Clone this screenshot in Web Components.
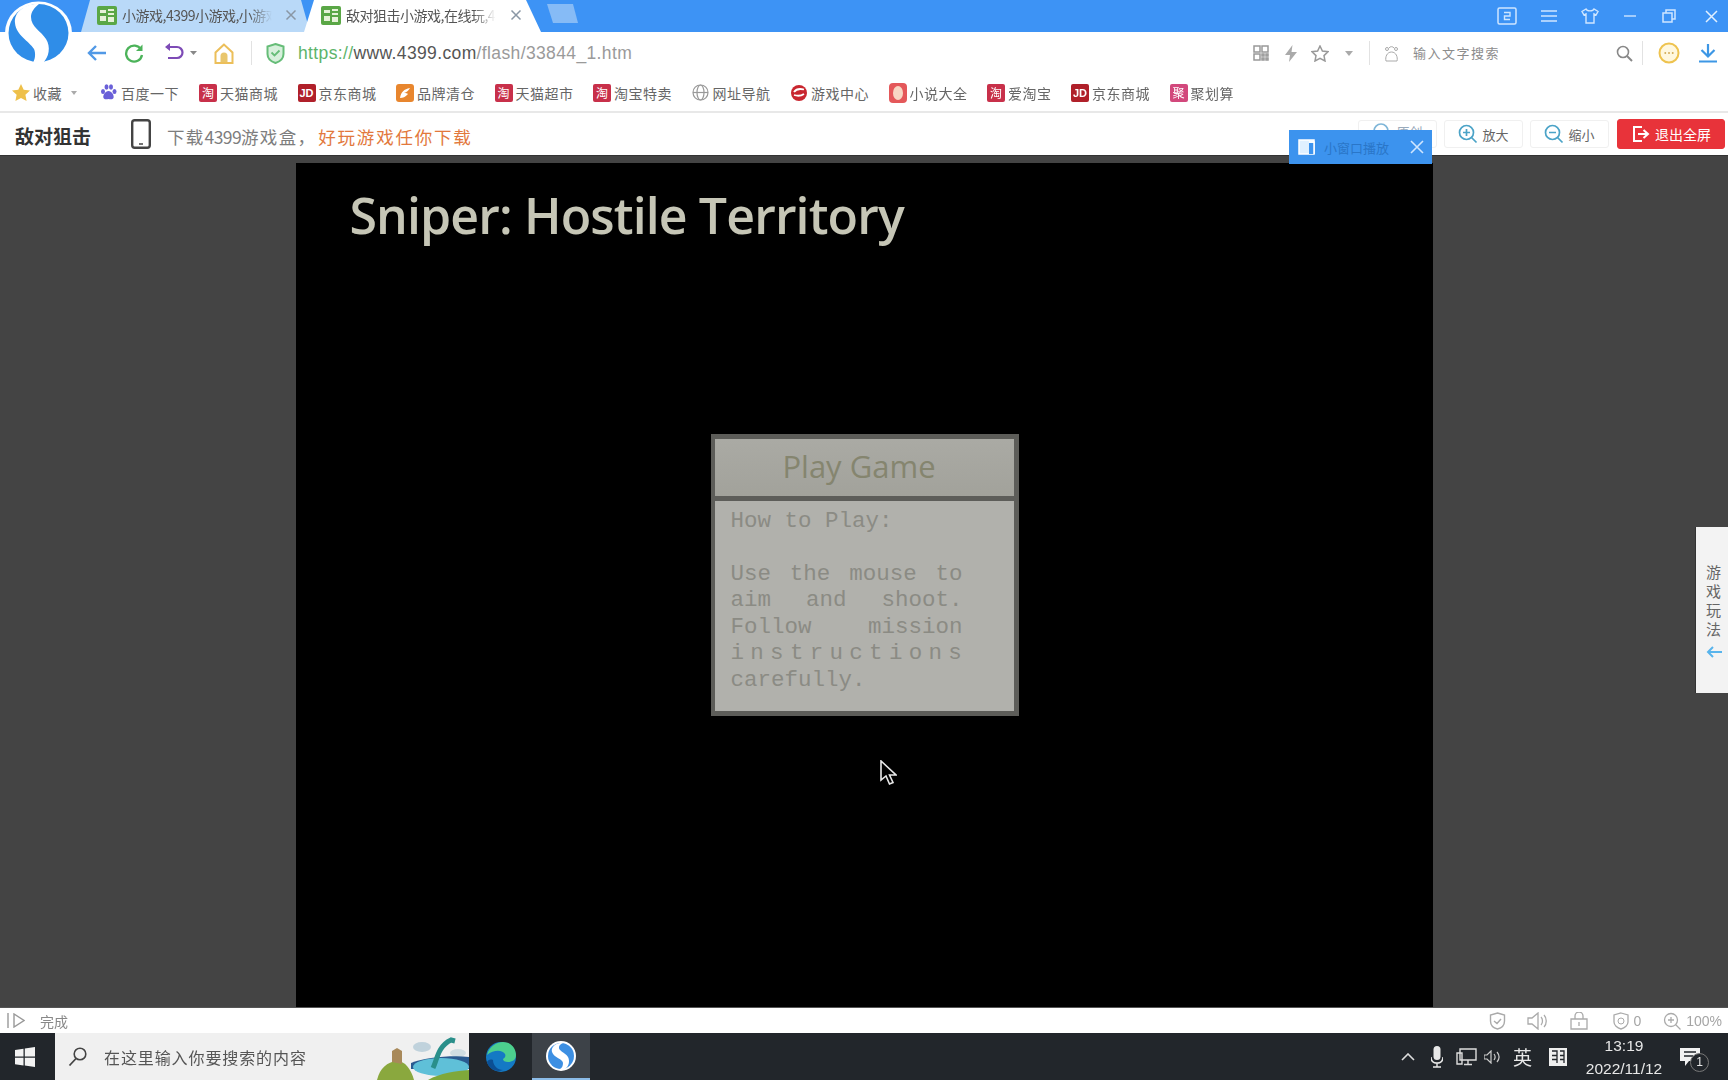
<!DOCTYPE html>
<html lang="zh-CN">
<head>
<meta charset="utf-8">
<title>敌对狙击</title>
<style>
  html, body { margin: 0; height: 100%; background: #444; overflow: hidden; }
  app-shell { filter: blur(.55px); }
</style>
</head>
<body>
<app-shell>
  <browser-tabs></browser-tabs>
  <browser-toolbar></browser-toolbar>
  <bookmark-bar>
    <bookmark-item icon="tmall" style="margin-left:-1px">天猫商城</bookmark-item>
    <bookmark-item icon="jd">京东商城</bookmark-item>
    <bookmark-item icon="brand">品牌清仓</bookmark-item>
    <bookmark-item icon="tmall">天猫超市</bookmark-item>
    <bookmark-item icon="tmall">淘宝特卖</bookmark-item>
    <bookmark-item icon="globe">网址导航</bookmark-item>
    <bookmark-item icon="game">游戏中心</bookmark-item>
    <bookmark-item icon="novel">小说大全</bookmark-item>
    <bookmark-item icon="tmall">爱淘宝</bookmark-item>
    <bookmark-item icon="jd">京东商城</bookmark-item>
    <bookmark-item icon="juhua">聚划算</bookmark-item>
  </bookmark-bar>
  <game-bar></game-bar>
  <game-stage></game-stage>
  <status-bar></status-bar>
  <task-bar></task-bar>
</app-shell>

<script>
const CJK = `"Noto Sans CJK SC", "Noto Sans", sans-serif`;

class AppShell extends HTMLElement {
  constructor() {
    super();
    const shadowRoot = this.attachShadow({mode: 'open'});
    shadowRoot.innerHTML = `
      <style>
        :host { display: flex; flex-direction: column; position: relative; width: 1728px; height: 1080px; overflow: hidden; font-family: ${CJK}; }
        svg { position: absolute; left: 5px; top: 1px; z-index: 5; }
      </style>
      <slot></slot>
      <svg width="67" height="64" viewBox="0 0 67 64">
        <ellipse cx="33.500" cy="32" rx="33.500" ry="31.500" fill="#fff"/>
        <ellipse cx="33.500" cy="32" rx="30" ry="29" fill="#2f8de8"/>
        <path d="M30 3C18 4 9 12 10 22c1 12 14 18 19 26 2 5 1 10-1 14h10c6-6 8-16 3-24-5-8-15-12-15-22 0-5 3-9 8-13z" fill="#fff"/>
      </svg>
    `;
  }
}

class BrowserTab extends HTMLElement {
  constructor() {
    super();
    const shadowRoot = this.attachShadow({mode: 'open'});
    shadowRoot.innerHTML = `
      <style>
        :host { display: flex; align-items: center; width: 229px; height: 32px; box-sizing: border-box; padding: 0 0 2px 16px; background: #b9d9f8; clip-path: polygon(9px 0, 220px 0, 229px 32px, 0 32px); font-size: 14px; color: #555; }
        :host([active]) { width: 237px; background: #fff; clip-path: polygon(10px 0, 222px 0, 237px 32px, 0 32px); padding-left: 17px; z-index: 1; }
        .label { width: 150px; margin-left: 5px; overflow: hidden; white-space: nowrap; letter-spacing: -.5px; -webkit-mask-image: linear-gradient(90deg, #000 85%, transparent); mask-image: linear-gradient(90deg, #000 85%, transparent); }
        .close { margin-left: 13px; }
        :host([active]) .close { margin-left: 14px; }
      </style>
      <svg width="20" height="19" viewBox="0 0 20 19"><rect width="20" height="19" rx="2" fill="#5aa746"/><path d="M3 4h6v3H3zM11 3h6v2h-6zM11 7h6v2h-6zM3 10h6v5H3zM11 11h6v5h-6z" fill="#e6f2d8"/></svg>
      <span class="label"><slot></slot></span>
      <svg class="close" width="12" height="12" viewBox="0 0 12 12"><path d="M1.500 1.500l9 9M10.500 1.500l-9 9" stroke="#8a97a5" stroke-width="1.500"/></svg>
    `;
  }
}

class BrowserTabs extends HTMLElement {
  constructor() {
    super();
    const shadowRoot = this.attachShadow({mode: 'open'});
    shadowRoot.innerHTML = `
      <style>
        :host { display: flex; align-items: center; height: 32px; flex: none; background: #3d93f5; padding-left: 81px; }
        .tabs { display: flex; }
        .tabs browser-tab + browser-tab { margin-left: -6px; }
        .new { width: 31px; height: 19px; margin: 0 0 5px 6px; background: #86bbf6; clip-path: polygon(0 0, 26px 0, 31px 19px, 6px 19px); }
        .win { display: flex; align-items: center; margin-left: auto; padding-right: 10px; }
        .win svg { display: block; }
      </style>
      <div class="tabs">
        <browser-tab>小游戏,4399小游戏,小游戏大全</browser-tab>
        <browser-tab active>敌对狙击小游戏,在线玩,4399</browser-tab>
      </div>
      <div class="new"></div>
      <div class="win">
        <svg width="20" height="18" viewBox="0 0 20 18"><rect x="1" y="1" width="18" height="16" rx="1.500" fill="none" stroke="#cfe6ff" stroke-width="1.500"/><path d="M7 5.500h6v3.500H7.500v3.500H13" fill="none" stroke="#cfe6ff" stroke-width="1.400"/></svg>
        <svg style="margin-left:24px" width="16" height="14" viewBox="0 0 16 14"><path d="M0 2h16M0 7h16M0 12h16" stroke="#cfe6ff" stroke-width="1.300"/></svg>
        <svg style="margin-left:24px" width="18" height="16" viewBox="0 0 18 16"><path d="M5 1L1 3.500 3 7l2-1v9h8V6l2 1 2-3.500L13 1c-1 2.500-7 2.500-8 0z" fill="none" stroke="#cfe6ff" stroke-width="1.400"/></svg>
        <svg style="margin-left:25px" width="12" height="4" viewBox="0 0 12 4"><path d="M0 2h12" stroke="#cfe6ff" stroke-width="1.400"/></svg>
        <svg style="margin-left:26px" width="14" height="14" viewBox="0 0 14 14"><path d="M1 4h9v9H1zM4 4V1h9v9h-3" fill="none" stroke="#cfe6ff" stroke-width="1.500"/></svg>
        <svg style="margin-left:29px" width="13" height="13" viewBox="0 0 13 13"><path d="M1 1l11 11M12 1L1 12" stroke="#e2f0ff" stroke-width="1.500"/></svg>
      </div>
    `;
  }
}

class BrowserToolbar extends HTMLElement {
  constructor() {
    super();
    const shadowRoot = this.attachShadow({mode: 'open'});
    shadowRoot.innerHTML = `
      <style>
        :host { display: flex; align-items: center; height: 40px; flex: none; background: #fff; padding: 2px 10px 0 87px; box-sizing: border-box; }
        svg { display: block; flex: none; }
        .sep { width: 1px; height: 24px; background: #e2e2e2; flex: none; }
        .url { margin-left: 13px; font: 17.500px "Liberation Sans", sans-serif; letter-spacing: .37px; color: #9a9a9a; white-space: nowrap; }
        .url b { font-weight: normal; color: #5cb46a; }
        .url i { font-style: normal; color: #555; }
        .search { margin: -2px 0 0 14px; font-size: 13px; letter-spacing: 1.500px; color: #8c8c8c; white-space: nowrap; }
        .right { display: flex; align-items: center; margin-left: auto; }
      </style>
      <svg width="20" height="18" viewBox="0 0 20 18"><path d="M19 9H2M9 2L2 9l7 7" fill="none" stroke="#5199e6" stroke-width="2.400"/></svg>
      <svg style="margin-left:17px" width="20" height="20" viewBox="0 0 20 20"><path d="M17 6.500A8 8 0 1 0 18 12" fill="none" stroke="#4cb35a" stroke-width="2.300"/><path d="M18.500 1.500v6.500H12z" fill="#4cb35a"/></svg>
      <svg style="margin-left:20px" width="20" height="20" viewBox="0 0 20 20"><path d="M5 4h8a5.500 5.500 0 0 1 0 11H4" fill="none" stroke="#7d4bb6" stroke-width="2.200"/><path d="M6 0v8L1 4z" fill="#7d4bb6"/></svg>
      <svg style="margin-left:6px" width="7" height="4" viewBox="0 0 7 4"><path d="M0 0h7L3.500 4z" fill="#888"/></svg>
      <svg style="margin-left:17px" width="20" height="21" viewBox="0 0 20 21"><path d="M10 1.500L1.500 9.500V20h17V9.500z" fill="#fff" stroke="#ecbf5a" stroke-width="2"/><path d="M6.500 19v-6a3.500 3.500 0 0 1 7 0v6z" fill="#e9c66c"/></svg>
      <div class="sep" style="margin-left:17px"></div>
      <svg style="margin-left:14px" width="19" height="21" viewBox="0 0 19 21"><path d="M9.500 1l8 2.500V11c0 4.500-3.500 7.500-8 9-4.500-1.500-8-4.500-8-9V3.500z" fill="#d7f0dc" stroke="#66bd78" stroke-width="2"/><path d="M5.500 9.500l3 3 5-5" fill="none" stroke="#66bd78" stroke-width="1.800"/></svg>
      <span class="url"><b>https://</b><i>www.4399.com</i>/flash/33844_1.htm</span>
      <div class="right">
        <svg style="margin-right:1px" width="16" height="16" viewBox="0 0 16 16"><path d="M1 1h6v6H1zM9 1h6v6H9zM1 9h6v6H1zM9 9h2v2H9zM13 9h2v2h-2zM9 13h2v2H9zM13 13h2v2h-2z" fill="none" stroke="#999" stroke-width="1.500"/></svg>
        <svg style="margin-left:15px" width="12" height="17" viewBox="0 0 12 17"><path d="M7.500 0L0 10h5l-1 7 8-10H6.500z" fill="#aaa"/></svg>
        <svg style="margin-left:14px" width="18" height="17" viewBox="0 0 18 17"><path d="M9 1l2.400 5 5.600.700-4 3.900 1 5.400L9 13.400 4 16l1-5.400-4-3.900L6.600 6z" fill="none" stroke="#999" stroke-width="1.500"/></svg>
        <svg style="margin-left:16px" width="8" height="5" viewBox="0 0 8 5"><path d="M0 0h8L4 5z" fill="#aaa"/></svg>
        <div class="sep" style="margin-left:16px"></div>
        <svg style="margin-left:14px" width="15" height="17" viewBox="0 0 15 17"><circle cx="3" cy="4" r="1.500" fill="none" stroke="#aaa"/><circle cx="12" cy="4" r="1.500" fill="none" stroke="#aaa"/><path d="M5 3a3 3 0 0 1 5 0M2 16c-1-4 1-9 5.500-9s6.500 5 5.500 9z" fill="none" stroke="#aaa"/></svg>
        <span class="search">输入文字搜索</span>
        <svg style="margin-left:116px" width="17" height="17" viewBox="0 0 17 17"><circle cx="7" cy="7" r="5.500" fill="none" stroke="#888" stroke-width="1.600"/><path d="M11 11l5 5" stroke="#888" stroke-width="2"/></svg>
        <div class="sep" style="margin-left:9px"></div>
        <svg style="margin-left:15px" width="22" height="22" viewBox="0 0 22 22"><circle cx="11" cy="11" r="9.500" fill="#fff8df" stroke="#eec34f" stroke-width="2"/><path d="M6.500 11h1.600M10.200 11h1.600M13.900 11h1.600" stroke="#c99a3a" stroke-width="1.600"/></svg>
        <svg style="margin-left:18px" width="20" height="19" viewBox="0 0 20 19"><path d="M10 0v11M3.500 6L10 12.500 16.500 6M1 17.500h18" fill="none" stroke="#3d97e5" stroke-width="2.200"/></svg>
      </div>
    `;
  }
}

const bookmarkIcons = {
  tmall: `<span class="box" style="background:#c8304a">淘</span>`,
  jd: `<span class="box jd" style="background:#b0202a">JD</span>`,
  brand: `<svg width="18" height="18" viewBox="0 0 18 18"><rect width="18" height="18" rx="3" fill="#e8862e"/><path d="M4 14c1-6 4-9 10-10-2 3-3 4-6 5 2 0 3 0 4 1-3 3-5 4-8 4z" fill="#fff"/></svg>`,
  globe: `<svg width="17" height="17" viewBox="0 0 17 17"><g fill="none" stroke="#999" stroke-width="1.200"><circle cx="8.500" cy="8.500" r="7.500"/><ellipse cx="8.500" cy="8.500" rx="3.500" ry="7.500"/><path d="M1 8.500h15"/></g></svg>`,
  game: `<svg width="18" height="18" viewBox="0 0 18 18"><circle cx="9" cy="9" r="8" fill="#c9262f"/><path d="M4 8c2-3 6-3.500 10-2.500M4 11c3 1 7 1 10-1" fill="none" stroke="#fff" stroke-width="1.800"/></svg>`,
  novel: `<svg width="18" height="20" viewBox="0 0 18 20"><rect width="18" height="20" rx="4" fill="#e4585a"/><ellipse cx="9" cy="10" rx="5" ry="7" fill="#f8d7c4"/></svg>`,
  juhua: `<span class="box" style="background:#d2487c">聚</span>`
};

class BookmarkItem extends HTMLElement {
  constructor() {
    super();
    const shadowRoot = this.attachShadow({mode: 'open'});
    shadowRoot.innerHTML = `
      <style>
        :host { display: flex; align-items: center; gap: 3px; font-size: 14px; letter-spacing: .5px; color: #666; white-space: nowrap; }
        .ic { display: flex; justify-content: center; width: 18px; flex: none; }
        .box { display: block; width: 18px; height: 18px; border-radius: 2px; font-size: 12px; line-height: 18px; text-align: center; color: #fff; letter-spacing: 0; }
        .jd { font: bold 11px/18px "Liberation Sans", sans-serif; }
        svg { display: block; }
      </style>
      <span class="ic"></span><slot></slot>
    `;
  }

  connectedCallback() {
    this.shadowRoot.querySelector('.ic').innerHTML = bookmarkIcons[this.getAttribute('icon')] || '';
  }
}

class BookmarkBar extends HTMLElement {
  constructor() {
    super();
    const shadowRoot = this.attachShadow({mode: 'open'});
    shadowRoot.innerHTML = `
      <style>
        :host { display: flex; align-items: center; height: 41px; flex: none; box-sizing: border-box; padding: 2px 0 0 12px; background: #fff; border-bottom: 2px solid #e8e8e8; font-size: 14px; letter-spacing: .5px; color: #666; }
        .list { display: flex; gap: 19.500px; }
        .lead { display: flex; align-items: center; white-space: nowrap; }
        svg { display: block; }
      </style>
      <div class="lead">
        <svg width="18" height="17" viewBox="0 0 18 17"><path d="M9 0l2.700 5.700 6.300.800-4.600 4.300 1.200 6.200L9 14l-5.600 3 1.200-6.200L0 6.500l6.300-.8z" fill="#eec04a"/></svg>
        <span style="margin-left:3px">收藏</span>
        <svg style="margin-left:9px" width="6" height="4" viewBox="0 0 6 4"><path d="M0 0h6L3 4z" fill="#aaa"/></svg>
        <svg style="margin-left:23px" width="17" height="17" viewBox="0 0 17 17"><g fill="#6a60d8"><ellipse cx="3" cy="7.500" rx="2" ry="2.500"/><ellipse cx="6.500" cy="3" rx="2" ry="2.700"/><ellipse cx="11" cy="3" rx="2" ry="2.700"/><ellipse cx="14.500" cy="7.500" rx="2" ry="2.500"/><path d="M8.500 7c-3 0-6 4-5 7 1 2 3.500 1 5 1s4 1 5-1c1-3-2-7-5-7z"/></g></svg>
        <span style="margin-left:4px;margin-right:21px">百度一下</span>
      </div>
      <div class="list"><slot></slot></div>
    `;
  }
}

class GameButton extends HTMLElement {
  constructor() {
    super();
    const shadowRoot = this.attachShadow({mode: 'open'});
    shadowRoot.innerHTML = `
      <style>
        :host { display: flex; align-items: center; justify-content: center; gap: 4px; width: 79px; height: 28px; box-sizing: border-box; border: 1px solid #f0f0f0; border-radius: 3px; background: #fff; font-size: 13px; color: #666; }
        :host([kind=exit]) { width: 108px; height: 30px; background: #e8333a; border-color: #e8333a; color: #fff; font-size: 14px; }
        :host([kind=plain]) { align-items: flex-start; padding-top: 1px; color: #9ab; }
        svg { display: block; }
      </style>
      <svg width="20" height="20" viewBox="0 0 20 20"></svg><slot></slot>
    `;
  }

  connectedCallback() {
    const kind = this.getAttribute('kind');
    const glyphs = {
      plain: `<circle cx="9" cy="9" r="7" fill="none" stroke="#7fb6d8" stroke-width="1.700"/>`,
      plus: `<circle cx="8.500" cy="8.500" r="7" fill="none" stroke="#4ba3c7" stroke-width="1.700"/><path d="M13.500 13.500l5 5M5 8.500h7M8.500 5v7" stroke="#4ba3c7" stroke-width="1.700"/>`,
      minus: `<circle cx="8.500" cy="8.500" r="7" fill="none" stroke="#4ba3c7" stroke-width="1.700"/><path d="M13.500 13.500l5 5M5 8.500h7" stroke="#4ba3c7" stroke-width="1.700"/>`,
      exit: `<path d="M11 3H3v14h8M7 10h9M12.500 6l4.500 4-4.500 4" fill="none" stroke="#fff" stroke-width="2"/>`
    };
    this.shadowRoot.querySelector('svg').innerHTML = glyphs[kind] || '';
  }
}

class GameBar extends HTMLElement {
  constructor() {
    super();
    const shadowRoot = this.attachShadow({mode: 'open'});
    shadowRoot.innerHTML = `
      <style>
        :host { display: flex; align-items: center; position: relative; height: 43px; flex: none; box-sizing: border-box; padding: 0 3px 0 15px; background: #fff; border-bottom: 1px solid #333; }
        .name { width: 116px; flex: none; margin-top: 3px; font-size: 19px; font-weight: 700; color: #333; white-space: nowrap; }
        svg { display: block; flex: none; }
        .promo { margin: 5px 0 0 16px; font-size: 17.500px; letter-spacing: 1.300px; color: #7d7d7d; white-space: nowrap; }
        .promo u { text-decoration: none; letter-spacing: -.6px; }
        .promo em { font-style: normal; color: #e2783c; margin-left: 2px; letter-spacing: 1.800px; }
        .btns { display: flex; align-items: center; gap: 7px; margin-left: auto; }
        .btns > :nth-child(3) { margin-right: 1px; }
        .popup { position: absolute; left: 1289px; top: 17px; width: 143px; height: 34px; box-sizing: border-box; display: flex; align-items: center; padding: 0 8px 0 9px; background: #3c93ee; color: #2a76c8; font-size: 13px; z-index: 3; }
        .popup span { margin-left: 9px; }
        .popup svg:last-child { margin-left: auto; }
      </style>
      <span class="name">敌对狙击</span>
      <svg width="20" height="30" viewBox="0 0 20 30"><rect x="1.200" y="1.200" width="17.600" height="27.600" rx="2.500" fill="#fff" stroke="#444" stroke-width="2.400"/><path d="M8 25h4" stroke="#444" stroke-width="1.500"/></svg>
      <span class="promo">下载<u>4399</u>游戏盒，<em>好玩游戏任你下载</em></span>
      <div class="btns">
        <game-button kind="plain">原创</game-button>
        <game-button kind="plus">放大</game-button>
        <game-button kind="minus">缩小</game-button>
        <game-button kind="exit">退出全屏</game-button>
      </div>
      <div class="popup">
        <svg width="17" height="16" viewBox="0 0 17 16"><rect x="1" y="1" width="15" height="14" fill="#dff0ff" stroke="#fff" stroke-width="1.500"/><path d="M11 4h5v11h-5z" fill="#3c93ee"/><path d="M11 3h5v12" fill="none" stroke="#fff" stroke-width="1.500"/></svg>
        <span>小窗口播放</span>
        <svg width="14" height="14" viewBox="0 0 14 14"><path d="M1 1l12 12M13 1L1 13" stroke="#cfe6ff" stroke-width="1.600"/></svg>
      </div>
    `;
  }
}

class MenuBox extends HTMLElement {
  constructor() {
    super();
    const shadowRoot = this.attachShadow({mode: 'open'});
    shadowRoot.innerHTML = `
      <style>
        :host { display: flex; flex-direction: column; width: 308px; height: 282px; box-sizing: border-box; border: 5px solid #5d5d59; border-left-width: 4px; background: #5d5d59; }
        .play { height: 57px; flex: none; margin-bottom: 5px; box-sizing: border-box; display: flex; align-items: center; justify-content: center; padding: 0 10px 4px 0; background: linear-gradient(#aaaaa4, #a2a29b); font: 31px "Open Sans", sans-serif; color: #85856f; }
        .how { flex: 1; padding: 7px 0 0 16px; background: #b1b1ac; font: 22.500px/26.450px "Liberation Mono", monospace; color: #8b8b84; }
        .l { width: 232px; height: 26.450px; white-space: nowrap; }
        .j { white-space: normal; text-align-last: justify; }
      </style>
      <div class="play">Play Game</div>
      <div class="how">
        <div class="l">How to Play:</div>
        <div class="l"></div>
        <div class="l j">Use the mouse to</div>
        <div class="l j">aim and shoot.</div>
        <div class="l j">Follow mission</div>
        <div class="l" style="letter-spacing:6.300px">instructions</div>
        <div class="l">carefully.</div>
      </div>
    `;
  }
}

class GameStage extends HTMLElement {
  constructor() {
    super();
    const shadowRoot = this.attachShadow({mode: 'open'});
    shadowRoot.innerHTML = `
      <style>
        :host { display: flex; justify-content: center; position: relative; flex: 1; min-height: 0; padding-top: 7px; box-sizing: border-box; background: #444; }
        .game { position: relative; width: 1137px; background: #000; padding: 19px 0 0 54px; box-sizing: border-box; }
        h1 { margin: 0; font: 600 50px/66px "Open Sans", sans-serif; letter-spacing: -.87px; color: #c6c6b6; white-space: nowrap; }
        menu-box { margin: 186px 0 0 361px; }
        .cursor { position: absolute; left: 584px; top: 597px; }
        .side { position: absolute; right: 0; top: 371px; width: 33px; height: 166px; box-sizing: border-box; padding: 35px 0 0 10px; background: #f3f3f3; border-left: 1px solid #333; font-size: 15px; line-height: 19px; color: #666; }
        .side svg { display: block; margin: 8px 0 0 0; }
      </style>
      <div class="game">
        <h1>Sniper: Hostile Territory</h1>
        <menu-box></menu-box>
        <svg class="cursor" width="17" height="27" viewBox="0 0 17 27"><path d="M1 1v19l5-4 3.500 8 3.500-1.500L9.500 15H16z" fill="#000" stroke="#e8e8e8" stroke-width="1.600"/></svg>
      </div>
      <div class="side">游<br>戏<br>玩<br>法
        <svg width="16" height="12" viewBox="0 0 16 12"><path d="M16 6H2M7 1L2 6l5 5" fill="none" stroke="#58b4ec" stroke-width="2"/></svg>
      </div>
    `;
  }
}

class StatusBar extends HTMLElement {
  constructor() {
    super();
    const shadowRoot = this.attachShadow({mode: 'open'});
    shadowRoot.innerHTML = `
      <style>
        :host { display: flex; align-items: center; height: 26px; flex: none; box-sizing: border-box; padding: 0 6px 0 7px; background: #fff; border-top: 1px solid #555; font-size: 14px; color: #888; }
        svg { display: block; flex: none; }
        .right { display: flex; align-items: center; margin-left: auto; font: 14px "Liberation Sans", sans-serif; color: #a5a5a5; }
      </style>
      <svg width="18" height="15" viewBox="0 0 18 15"><path d="M1 0v15M7 1v13l10-6.500z" fill="none" stroke="#999" stroke-width="1.400"/></svg>
      <span style="margin-left:15px">完成</span>
      <div class="right">
        <svg width="17" height="18" viewBox="0 0 17 18"><path d="M8.500 1l7 2v6c0 4-3 7-7 8-4-1-7-4-7-8V3z M5 9l3 2.500L12 7" fill="none" stroke="#aaa" stroke-width="1.400"/></svg>
        <svg style="margin-left:21px" width="20" height="18" viewBox="0 0 20 18"><path d="M1 6v6h4l6 5V1L5 6zM14 5c2 2 2 6 0 8M17 3c3 3 3 9 0 12" fill="none" stroke="#aaa" stroke-width="1.300"/></svg>
        <svg style="margin-left:23px" width="18" height="18" viewBox="0 0 18 18"><path d="M1 7h16v10H1zM5 7V4a4 4 0 0 1 8 0v3M9 10v4" fill="none" stroke="#aaa" stroke-width="1.300"/></svg>
        <svg style="margin-left:24px" width="18" height="18" viewBox="0 0 18 18"><path d="M9 1l7 2v7c0 3-3 6-7 7-4-1-7-4-7-7V3z" fill="none" stroke="#aaa" stroke-width="1.300"/><circle cx="9" cy="9" r="3" fill="none" stroke="#aaa"/></svg>
        <span style="margin-left:3px">0</span>
        <svg style="margin-left:22px" width="18" height="18" viewBox="0 0 18 18"><circle cx="8" cy="8" r="6.500" fill="none" stroke="#aaa" stroke-width="1.300"/><path d="M12.500 12.500l5 5M5 8h6M8 5v6" stroke="#aaa" stroke-width="1.300"/></svg>
        <span style="margin-left:5px">100%</span>
      </div>
    `;
  }
}

class TaskBar extends HTMLElement {
  constructor() {
    super();
    const shadowRoot = this.attachShadow({mode: 'open'});
    shadowRoot.innerHTML = `
      <style>
        :host { display: flex; align-items: stretch; height: 47px; flex: none; background: #22262b; color: #e8e8e8; }
        svg { display: block; flex: none; }
        .start { width: 55px; display: flex; align-items: center; justify-content: center; padding-right: 5px; box-sizing: border-box; }
        .search { display: flex; align-items: center; position: relative; width: 414px; padding-left: 13px; box-sizing: border-box; background: #f0f0f0; overflow: hidden; color: #555; font-size: 16px; letter-spacing: .9px; white-space: nowrap; }
        .search span { margin-left: 17px; }
        .scene { position: absolute; right: 0; bottom: 0; }
        .app { display: flex; align-items: center; justify-content: center; }
        .edge { width: 63px; }
        .active { width: 58px; background: #3d4248; border-bottom: 2px solid #8cbce8; box-sizing: border-box; }
        .tray { display: flex; align-items: center; margin-left: auto; padding-right: 28px; position: relative; }
        .clock { width: 86px; text-align: center; font: 15.500px/23px "Liberation Sans", sans-serif; margin-left: 14px; }
        .ime { font-size: 19px; margin-left: 12px; }
        .notice { position: relative; margin-left: 13px; }
        .notice b { position: absolute; right: -9px; bottom: -5px; width: 17px; height: 17px; border: 1px solid #777; border-radius: 50%; font: 12px/17px "Liberation Sans", sans-serif; text-align: center; background: #22262b; }
      </style>
      <div class="start"><svg width="20" height="20" viewBox="0 0 20 20"><path d="M0 3l8.500-1.200V9.500H0zM9.800 1.600L20 0v9.500H9.800zM0 10.800h8.500v7.600L0 17.200zM9.800 10.800H20V20L9.800 18.600z" fill="#f2f2f2"/></svg></div>
      <div class="search">
        <svg width="19" height="20" viewBox="0 0 19 20"><circle cx="12" cy="7" r="5.800" fill="none" stroke="#444" stroke-width="1.600"/><path d="M8 11.500L1.500 18.500" stroke="#444" stroke-width="1.800"/></svg>
        <span>在这里输入你要搜索的内容</span>
        <svg class="scene" width="96" height="47" viewBox="0 0 96 47">
          <ellipse cx="49" cy="14" rx="9" ry="5" fill="#c0d2dc"/>
          <ellipse cx="85" cy="20" rx="8" ry="4" fill="#d0dde2"/>
          <path d="M38 30c12-5 40-8 58-6v12H38z" fill="#2a5a90"/>
          <ellipse cx="68" cy="34" rx="28" ry="9" fill="#5fc0d8"/>
          <path d="M60 35c4-8 5-22 18-28l4 1" fill="none" stroke="#2a8f8a" stroke-width="5"/>
          <path d="M55 47c12-7 28-9 41-10v10z" fill="#7fa83a"/>
          <path d="M4 47c3-12 10-18 20-19 8 0 14 8 17 19z" fill="#8aa83e"/>
          <path d="M19 29v-11l5-3 5 3v13z" fill="#a8895a"/>
        </svg>
      </div>
      <div class="app edge"><svg width="32" height="32" viewBox="0 0 32 32"><circle cx="16" cy="16" r="15" fill="#1479c4"/><path d="M2 14C4 5 12 1 18 1c8 0 13 6 13 13 0 5-4 7-8 7-3 0-5-1-5-3 2-1 3-3 2-5-2-4-11-5-18 1z" fill="#4ccf8e"/><path d="M8 19c0 6 5 10 10 10-7 3-14-1-16-8 1-2 3-3 6-2z" fill="#0b4f94"/></svg></div>
      <div class="app active"><svg width="32" height="32" viewBox="0 0 32 32"><circle cx="16" cy="16" r="15" fill="#fff"/><circle cx="16" cy="16" r="13" fill="#3d8fe2"/><path d="M15 3C9 4 6 8 7 12c2 6 11 7 11 11 0 3-1 5-3 6h5c4-3 5-8 3-12-3-5-10-6-9-10 0-2 2-3 4-4z" fill="#fff"/></svg></div>
      <div class="tray">
        <svg width="14" height="8" viewBox="0 0 14 8"><path d="M1 7l6-6 6 6" fill="none" stroke="#ddd" stroke-width="1.600"/></svg>
        <svg style="margin-left:16px" width="12" height="22" viewBox="0 0 12 22"><rect x="2.500" y="0" width="7" height="14" rx="3.500" fill="#e8e8e8"/><path d="M0 11c0 4 2.500 6 6 6s6-2 6-6M6 17v4M2 21h8" fill="none" stroke="#e8e8e8" stroke-width="1.400"/></svg>
        <svg style="margin-left:13px" width="21" height="18" viewBox="0 0 21 18"><path d="M4 1h16v11H4zM12 12v4M8 16.500h8M1 5h5v11H1z" fill="#22262b" stroke="#ddd" stroke-width="1.400"/></svg>
        <svg style="margin-left:7px" width="17" height="14" viewBox="0 0 17 14"><path d="M0 5v4h3l4 4V1L3 5zM10 4c1.500 2 1.500 4 0 6M13 2c2.500 3 2.500 7 0 10" fill="none" stroke="#ccc" stroke-width="1.200"/></svg>
        <span class="ime">英</span>
        <svg style="margin-left:17px" width="18" height="18" viewBox="0 0 18 18"><rect width="18" height="18" fill="#eee"/><path d="M3 3h5v12M3 7.500h5M3 11.500h5M11 3h4v12M11 7.500h4M11 11.500h4" fill="none" stroke="#22262b" stroke-width="1.300"/></svg>
        <div class="clock">13:19<br>2022/11/12</div>
        <div class="notice">
          <svg width="20" height="20" viewBox="0 0 20 20"><path d="M0 1h20v13H9l-4 5v-5H0z" fill="#f2f2f2"/><path d="M4 5h12M4 9h9" stroke="#22262b" stroke-width="1.300"/></svg>
          <b>1</b>
        </div>
      </div>
    `;
  }
}

customElements.define('app-shell', AppShell);
customElements.define('browser-tab', BrowserTab);
customElements.define('browser-tabs', BrowserTabs);
customElements.define('browser-toolbar', BrowserToolbar);
customElements.define('bookmark-item', BookmarkItem);
customElements.define('bookmark-bar', BookmarkBar);
customElements.define('game-button', GameButton);
customElements.define('game-bar', GameBar);
customElements.define('menu-box', MenuBox);
customElements.define('game-stage', GameStage);
customElements.define('status-bar', StatusBar);
customElements.define('task-bar', TaskBar);
</script>
</body>
</html>
